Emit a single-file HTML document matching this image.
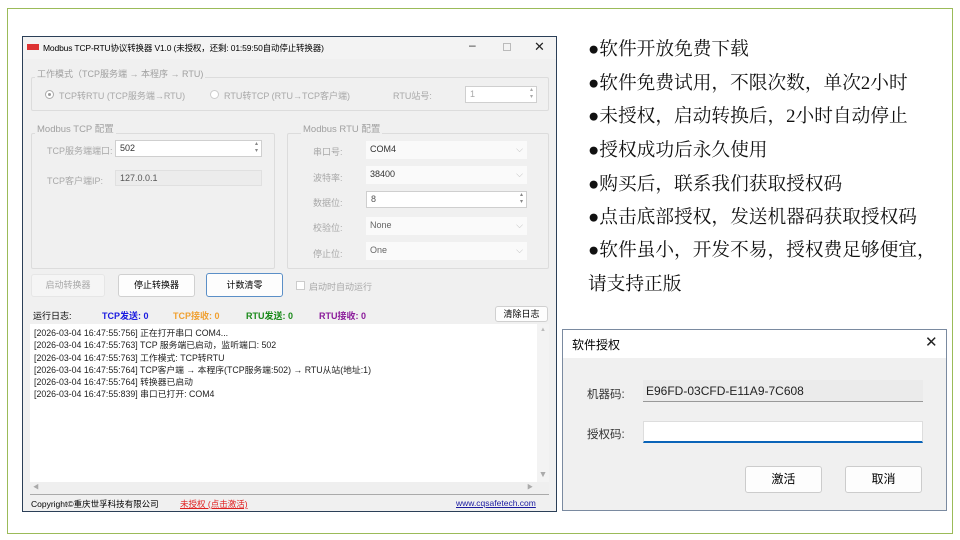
<!DOCTYPE html>
<html><head><meta charset="utf-8"><style>
*{margin:0;padding:0;box-sizing:border-box}
body{width:960px;height:540px;background:#fff;position:relative;overflow:hidden;font-family:"Liberation Sans","Noto Sans CJK SC",sans-serif;font-size:9px;color:#000}
.a{position:absolute}
.frame{left:7px;top:8px;width:946px;height:526px;border:1px solid #9bbb59}
.win{left:22px;top:36px;width:535px;height:476px;background:#f0f0f0;border:1px solid #2b3f57}
.tb{left:0;top:0;width:533px;height:22px;background:#f3f3f3}
.gb{border:1px solid #dcdcdc;border-radius:2px}
.gl{background:#f0f0f0;color:#a0a0a0;padding:0 2px;font-size:9px}
.dis{color:#a8a8a8}
.inp{background:#fff;border:1px solid #cfcfcf;font-size:9px;padding-left:4px;line-height:14px}
.cmb{background:#fafafa;border:none;color:#666;font-size:9px;padding-left:4px;line-height:17px}
.btn{background:#fdfdfd;border:1px solid #d0d0d0;border-radius:3px;text-align:center;font-size:9px}
.log div{line-height:12.3px;font-size:8.8px;color:#222}
.rt{left:588px;font-family:"Liberation Serif","Noto Serif CJK SC",serif;font-size:18.7px;color:#111;white-space:nowrap}
</style></head><body>
<div class="a frame"></div>

<div class="a win">
 <div class="a tb">
  <div class="a" style="left:4px;top:7px;width:12px;height:6px;background:#d33;"></div>
  <div class="a" style="left:20px;top:5px;font-size:8.5px;letter-spacing:-0.15px">Modbus TCP-RTU协议转换器 V1.0 (未授权，还剩: 01:59:50自动停止转换器)</div>
  <div class="a" style="left:446px;top:1px;font-size:12px;color:#333">–</div>
  <div class="a" style="left:480px;top:6px;width:8px;height:8px;border:1px solid #bbb"></div>
  <div class="a" style="left:511px;top:2px;font-size:13px;color:#222">✕</div>
 </div>
 <div class="a gb" style="left:8px;top:40px;width:518px;height:34px"></div>
 <div class="a gl" style="left:12px;top:30px">工作模式（TCP服务端 → 本程序 → RTU)</div>
 <div class="a" style="left:22px;top:53px;width:9px;height:9px;border-radius:50%;border:1px solid #aaa;background:#fff"><div class="a" style="left:2px;top:2px;width:3px;height:3px;border-radius:50%;background:#999"></div></div>
 <div class="a dis" style="left:36px;top:52px">TCP转RTU (TCP服务端→RTU)</div>
 <div class="a" style="left:187px;top:53px;width:9px;height:9px;border-radius:50%;border:1px solid #ccc;background:#fff"></div>
 <div class="a dis" style="left:201px;top:52px">RTU转TCP (RTU→TCP客户端)</div>
 <div class="a dis" style="left:370px;top:52px">RTU站号:</div>
 <div class="a inp dis" style="left:442px;top:49px;width:72px;height:17px;line-height:15px">1<span class="a" style="right:3px;top:0;font-size:6px;line-height:7px">▴<br>▾</span></div>
 <div class="a gb" style="left:8px;top:96px;width:244px;height:136px"></div>
 <div class="a gl" style="left:12px;top:84px;font-size:9.5px">Modbus TCP 配置</div>
 <div class="a dis" style="left:24px;top:107px">TCP服务端端口:</div>
 <div class="a inp" style="left:92px;top:103px;width:147px;height:17px;line-height:15px;color:#333">502<span class="a" style="right:3px;top:0;font-size:6px;line-height:7px;color:#888">▴<br>▾</span></div>
 <div class="a dis" style="left:24px;top:137px">TCP客户端IP:</div>
 <div class="a" style="left:92px;top:133px;width:147px;height:16px;background:#ececec;border:1px solid #e0e0e0;color:#555;padding-left:4px;line-height:14px">127.0.0.1</div>
 <div class="a gb" style="left:264px;top:96px;width:262px;height:136px"></div>
 <div class="a gl" style="left:278px;top:84px;font-size:9.5px">Modbus RTU 配置</div>
 <div class="a dis" style="left:290px;top:108px">串口号:</div>
 <div class="a cmb" style="left:343px;top:104px;width:161px;height:18px;color:#333">COM4<span class="a" style="right:4px;color:#bbb">⌵</span></div>
 <div class="a dis" style="left:290px;top:134px">波特率:</div>
 <div class="a cmb" style="left:343px;top:129px;width:161px;height:18px;color:#333">38400<span class="a" style="right:4px;color:#bbb">⌵</span></div>
 <div class="a dis" style="left:290px;top:159px">数据位:</div>
 <div class="a inp" style="left:343px;top:154px;width:161px;height:17px;line-height:15px;color:#555">8<span class="a" style="right:3px;top:0;font-size:6px;line-height:7px;color:#888">▴<br>▾</span></div>
 <div class="a dis" style="left:290px;top:184px">校验位:</div>
 <div class="a cmb" style="left:343px;top:180px;width:161px;height:18px">None<span class="a" style="right:4px;color:#bbb">⌵</span></div>
 <div class="a dis" style="left:290px;top:210px">停止位:</div>
 <div class="a cmb" style="left:343px;top:205px;width:161px;height:18px">One<span class="a" style="right:4px;color:#bbb">⌵</span></div>
 <div class="a btn dis" style="left:8px;top:237px;width:74px;height:23px;line-height:21px;background:#f5f5f5;border-color:#e6e6e6">启动转换器</div>
 <div class="a btn" style="left:95px;top:237px;width:77px;height:23px;line-height:21px">停止转换器</div>
 <div class="a btn" style="left:183px;top:236px;width:77px;height:24px;line-height:22px;border:1px solid #5b8fc7">计数清零</div>
 <div class="a" style="left:273px;top:244px;width:9px;height:9px;border:1px solid #ccc;background:#fff"></div>
 <div class="a dis" style="left:286px;top:243px">启动时自动运行</div>
 <div class="a" style="left:10px;top:272px">运行日志:</div>
 <div class="a" style="left:79px;top:272px;color:#1a1ae0;font-weight:bold">TCP发送: 0</div>
 <div class="a" style="left:150px;top:272px;color:#f0a030;font-weight:bold">TCP接收: 0</div>
 <div class="a" style="left:223px;top:272px;color:#1a8a1a;font-weight:bold">RTU发送: 0</div>
 <div class="a" style="left:296px;top:272px;color:#8a1a9a;font-weight:bold">RTU接收: 0</div>
 <div class="a btn" style="left:472px;top:269px;width:53px;height:16px;line-height:14px">清除日志</div>
 <div class="a log" style="left:7px;top:287px;width:519px;height:170px;background:#fff;padding:3px 0 0 4px">
  <div>[2026-03-04 16:47:55:756] 正在打开串口 COM4...</div>
  <div>[2026-03-04 16:47:55:763] TCP 服务端已启动，监听端口: 502</div>
  <div>[2026-03-04 16:47:55:763] 工作模式: TCP转RTU</div>
  <div>[2026-03-04 16:47:55:764] TCP客户端 → 本程序(TCP服务端:502) → RTU从站(地址:1)</div>
  <div>[2026-03-04 16:47:55:764] 转换器已启动</div>
  <div>[2026-03-04 16:47:55:839] 串口已打开: COM4</div>
  <div class="a" style="right:0;top:0;width:12px;height:158px;background:#f3f3f3;color:#bbb;font-size:6px;text-align:center">▲<div style="position:absolute;bottom:2px;width:12px;color:#aaa">▼</div></div>
  <div class="a" style="left:0;bottom:0;width:519px;height:12px;background:#efefef;color:#aaa;font-size:6px;line-height:12px;padding-left:3px">◀<span style="position:absolute;right:16px">▶</span></div>
 </div>
 <div class="a" style="left:7px;top:457px;width:519px;height:1px;background:#aaa"></div>
 <div class="a" style="left:8px;top:461px;font-size:8.5px">Copyright©重庆世孚科技有限公司</div>
 <div class="a" style="left:157px;top:461px;font-size:8.5px;color:#e02020;text-decoration:underline">未授权 (点击激活)</div>
 <div class="a" style="left:433px;top:461px;font-size:8.5px;color:#1a1aa0;text-decoration:underline">www.cqsafetech.com</div>
</div>

<div class="a rt" style="top:34px">●软件开放免费下载</div>
<div class="a rt" style="top:68px">●软件免费试用，不限次数，单次2小时</div>
<div class="a rt" style="top:101px">●未授权，启动转换后，2小时自动停止</div>
<div class="a rt" style="top:135px">●授权成功后永久使用</div>
<div class="a rt" style="top:169px">●购买后，联系我们获取授权码</div>
<div class="a rt" style="top:202px">●点击底部授权，发送机器码获取授权码</div>
<div class="a rt" style="top:235px">●软件虽小，开发不易，授权费足够便宜，</div>
<div class="a rt" style="top:269px">请支持正版</div>

<div class="a" style="left:562px;top:329px;width:385px;height:182px;background:#f0f0f0;border:1px solid #7a8aa0">
 <div class="a" style="left:0;top:0;width:383px;height:28px;background:#fff"></div>
 <div class="a" style="left:9px;top:6px;font-size:12px">软件授权</div>
 <div class="a" style="left:362px;top:3px;font-size:15px;color:#222">✕</div>
 <div class="a" style="left:24px;top:56px;font-size:11.5px;color:#333">机器码:</div>
 <div class="a" style="left:80px;top:50px;width:280px;height:22px;background:#ebebeb;border-bottom:1px solid #999;font-size:12px;line-height:22px;padding-left:3px;color:#222">E96FD-03CFD-E11A9-7C608</div>
 <div class="a" style="left:24px;top:96px;font-size:11.5px;color:#333">授权码:</div>
 <div class="a" style="left:80px;top:91px;width:280px;height:22px;background:#fff;border:1px solid #ddd;border-bottom:2px solid #0a64b8"></div>
 <div class="a" style="left:182px;top:136px;width:77px;height:27px;background:#fdfdfd;border:1px solid #ccc;border-radius:3px;text-align:center;line-height:25px;font-size:12px">激活</div>
 <div class="a" style="left:282px;top:136px;width:77px;height:27px;background:#fdfdfd;border:1px solid #ccc;border-radius:3px;text-align:center;line-height:25px;font-size:12px">取消</div>
</div>
</body></html>
